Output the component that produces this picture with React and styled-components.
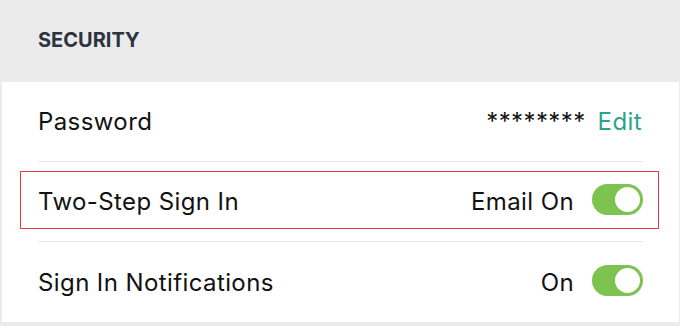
import React from "react";
import styled, { createGlobalStyle } from "styled-components";

const Global = createGlobalStyle`
  html, body { margin: 0; padding: 0; background: #ebebeb; }
  body { font-family: Inter, "Noto Sans", sans-serif; -webkit-font-smoothing: antialiased; }
`;

const Page = styled.div`
  width: 680px;
  height: 326px;
  background: #ebebeb;
  display: flex;
  flex-direction: column;
  box-sizing: border-box;
`;

const SectionHeader = styled.div`
  height: 82px;
  display: flex;
  align-items: center;
  padding: 0 38px 2px;
  box-sizing: border-box;
  font-size: 20px;
  font-weight: 700;
  color: #2d3340;
`;

const Card = styled.div`
  margin: 0 1px 0 2px;
  background: #ffffff;
  display: flex;
  flex-direction: column;
  padding: 0 36px 0 36px;
`;

const Row = styled.div`
  position: relative;
  height: 80px;
  display: flex;
  align-items: center;
  justify-content: space-between;
  box-sizing: border-box;
  border-bottom: ${(p) => (p.$last ? "none" : "1.5px solid #e8e8e8")};
  font-size: 24px;
  letter-spacing: 0.4px;
  color: #121212;

  ${(p) =>
    p.$highlight &&
    `
    &::after {
      content: "";
      position: absolute;
      left: -18px;
      right: -16px;
      top: 9px;
      bottom: 12px;
      border: 1px solid #e23a40;
      pointer-events: none;
    }
  `}
`;

const Label = styled.span``;

const Value = styled.div`
  display: flex;
  align-items: center;
  gap: ${(p) => p.$gap || 12}px;
`;

const Stars = styled.span``;

const EditLink = styled.span`
  color: #2aa58a;
  margin-right: 1px;
`;

const Track = styled.div`
  width: 51px;
  height: 31px;
  margin-bottom: 4px;
  border-radius: 16px;
  background: #7cc350;
  display: flex;
  align-items: center;
  justify-content: ${(p) => (p.$on ? "flex-end" : "flex-start")};
  padding: 0 3px;
  box-sizing: border-box;
`;

const Knob = styled.div`
  width: 25px;
  height: 25px;
  border-radius: 50%;
  background: #ffffff;
`;

const Toggle = ({ on }) => (
  <Track $on={on}>
    <Knob />
  </Track>
);

export default function App() {
  return (
    <Page>
      <Global />
      <SectionHeader>SECURITY</SectionHeader>
      <Card>
        <Row>
          <Label>Password</Label>
          <Value $gap={12}>
            <Stars>********</Stars>
            <EditLink>Edit</EditLink>
          </Value>
        </Row>
        <Row $highlight>
          <Label>Two-Step Sign In</Label>
          <Value $gap={18}>
            <span>Email On</span>
            <Toggle on />
          </Value>
        </Row>
        <Row $last>
          <Label>Sign In Notifications</Label>
          <Value $gap={18}>
            <span>On</span>
            <Toggle on />
          </Value>
        </Row>
      </Card>
    </Page>
  );
}
